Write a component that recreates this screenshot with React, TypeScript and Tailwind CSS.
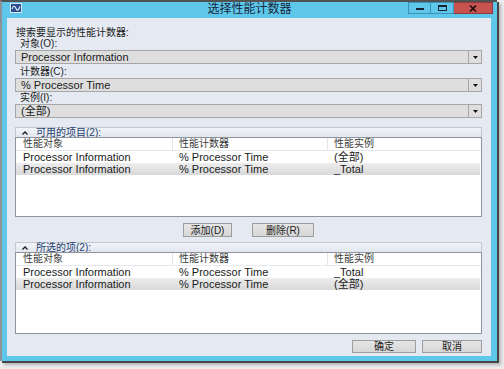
import React from "react";

const rows1 = [
  { obj: "Processor Information", counter: "% Processor Time", inst: "(全部)" },
  { obj: "Processor Information", counter: "% Processor Time", inst: "_Total" },
];

const rows2 = [
  { obj: "Processor Information", counter: "% Processor Time", inst: "_Total" },
  { obj: "Processor Information", counter: "% Processor Time", inst: "(全部)" },
];

function Combo({ value }: { value: string }) {
  return (
    <div className="flex h-[14px] border border-[#a6a6a6] bg-[#dedede]">
      <div className="flex-1 pl-[5px] text-[11px] leading-[12px] text-[#1b1b1b]">{value}</div>
      <div className="flex w-[13px] items-center justify-center border-l border-[#a6a6a6]">
        <svg width="5" height="3" viewBox="0 0 5 3">
          <path d="M0 0H5L2.5 3Z" fill="#111" />
        </svg>
      </div>
    </div>
  );
}

function Label({ text }: { text: string }) {
  return <div className="h-[11px] pl-[5px] text-[10px] leading-[11px] text-[#1b1b1b]">{text}</div>;
}

function Section({ title, rows, height }: { title: string; rows: typeof rows1; height: string }) {
  return (
    <div className="flex flex-col">
      <div className="flex h-[10px] items-center border-x border-t border-[#c3c8d0] bg-gradient-to-b from-[#f2f4f8] to-[#e2e6ee]">
        <svg className="ml-[6px]" width="6" height="4" viewBox="0 0 6 4">
          <path d="M0.5 3.5L3 1L5.5 3.5" stroke="#1b1b1b" strokeWidth="1.3" fill="none" />
        </svg>
        <span className="ml-[8px] text-[10px] leading-[10px] text-[#24406e]">{title}</span>
      </div>
      <div className={`${height} border border-[#8f949c] bg-white`}>
        <div className="grid h-[13px] grid-cols-[157px_155px_1fr] border-b border-[#e6e8ec] text-[10px] leading-[12px] text-[#3a3a3a]">
          <div className="border-r border-[#e3e5e9] pl-[7px]">性能对象</div>
          <div className="border-r border-[#e3e5e9] pl-[6px]">性能计数器</div>
          <div className="pl-[6px]">性能实例</div>
        </div>
        {rows.map((r, i) => (
          <div
            key={i}
            className={`grid h-[12px] grid-cols-[157px_155px_1fr] text-[11px] leading-[12px] text-[#1b1b1b] ${
              i === 1 ? "mr-px bg-gradient-to-b from-[#ededed] to-[#d9d9d9]" : ""
            }`}
          >
            <div className="pl-[7px]">{r.obj}</div>
            <div className="pl-[6px]">{r.counter}</div>
            <div className="pl-[6px]">{r.inst}</div>
          </div>
        ))}
      </div>
    </div>
  );
}

function Button({ text, width }: { text: string; width: string }) {
  return (
    <div
      className={`${width} flex h-full items-center justify-center border border-[#9d9d9d] bg-gradient-to-b from-[#e6e6e6] to-[#d6d6d6] text-[10px] text-[#1b1b1b]`}
    >
      {text}
    </div>
  );
}

export default function App() {
  return (
    <div className="h-[369px] w-[504px] overflow-hidden bg-[#ececec] font-['Liberation_Sans','Noto_Sans_CJK_SC',sans-serif]">
      <div className="flex h-[361px] w-[497px] flex-col border-l-2 border-t-2 border-l-[#8d9298] border-t-[#525252] bg-[#5fc7ea] pb-[5px] shadow-[2px_2px_0_#464646,4px_4px_3px_#b5b5b5]">
        <div className="grid h-[16px] grid-cols-[1fr_auto_1fr]">
          <div className="pl-[8px] pt-[1px]">
            <svg width="12" height="10" viewBox="0 0 12 10">
              <rect x="0.5" y="0.5" width="11" height="9" fill="#2e4f8e" stroke="#d6e6f4" />
              <path d="M2 6C3.5 2.5 4.5 2.5 6 5.5S8.5 7 10 3.5" stroke="#eaf4ff" strokeWidth="1.1" fill="none" />
            </svg>
          </div>
          <div className="text-[12px] leading-[14px] text-[#16263a]">选择性能计数器</div>
          <div className="flex justify-end pr-[4px]">
            <div className="flex h-[12px] w-[23px] items-end justify-center border border-[#3d93b5] pb-[3px]">
              <div className="h-[2px] w-[8px] bg-[#1a2230]" />
            </div>
            <div className="flex h-[12px] w-[23px] items-center justify-center border-y border-r border-[#3d93b5]">
              <div className="h-[6px] w-[9px] border border-t-2 border-[#1a2230]" />
            </div>
            <div className="flex h-[12px] w-[39px] items-center justify-center border-y border-r border-[#8e3a3a] bg-[#c75250]">
              <svg width="8" height="7" viewBox="0 0 8 7">
                <path d="M1 0.5L7 6.5M7 0.5L1 6.5" stroke="#1a1010" strokeWidth="1.6" />
              </svg>
            </div>
          </div>
        </div>
        <div className="ml-[5px] mr-[6px] flex h-[338px] flex-col bg-[#e5eaf2] pl-[8px] pr-[9px] pt-[9px]">
          <div className="h-[11px] pl-[1px] text-[10px] leading-[11px] text-[#1b1b1b]">搜索要显示的性能计数器:</div>
          <Label text="对象(O):" />
          <div className="mt-[1px]">
            <Combo value="Processor Information" />
          </div>
          <div className="mt-[2px]">
            <Label text="计数器(C):" />
          </div>
          <div className="mt-[1px]">
            <Combo value="% Processor Time" />
          </div>
          <Label text="实例(I):" />
          <div className="mt-[1px]">
            <Combo value="(全部)" />
          </div>
          <div className="mt-[9px]">
            <Section title="可用的项目(2):" rows={rows1} height="h-[80px]" />
          </div>
          <div className="mt-[6px] flex h-[14px] justify-center gap-[20px]">
            <Button text="添加(D)" width="w-[49px]" />
            <Button text="删除(R)" width="w-[62px]" />
          </div>
          <div className="mt-[5px]">
            <Section title="所选的项(2):" rows={rows2} height="h-[82px]" />
          </div>
          <div className="mt-[6px] flex h-[13px] justify-end gap-[6px]">
            <Button text="确定" width="w-[64px]" />
            <Button text="取消" width="w-[60px]" />
          </div>
        </div>
      </div>
    </div>
  );
}
